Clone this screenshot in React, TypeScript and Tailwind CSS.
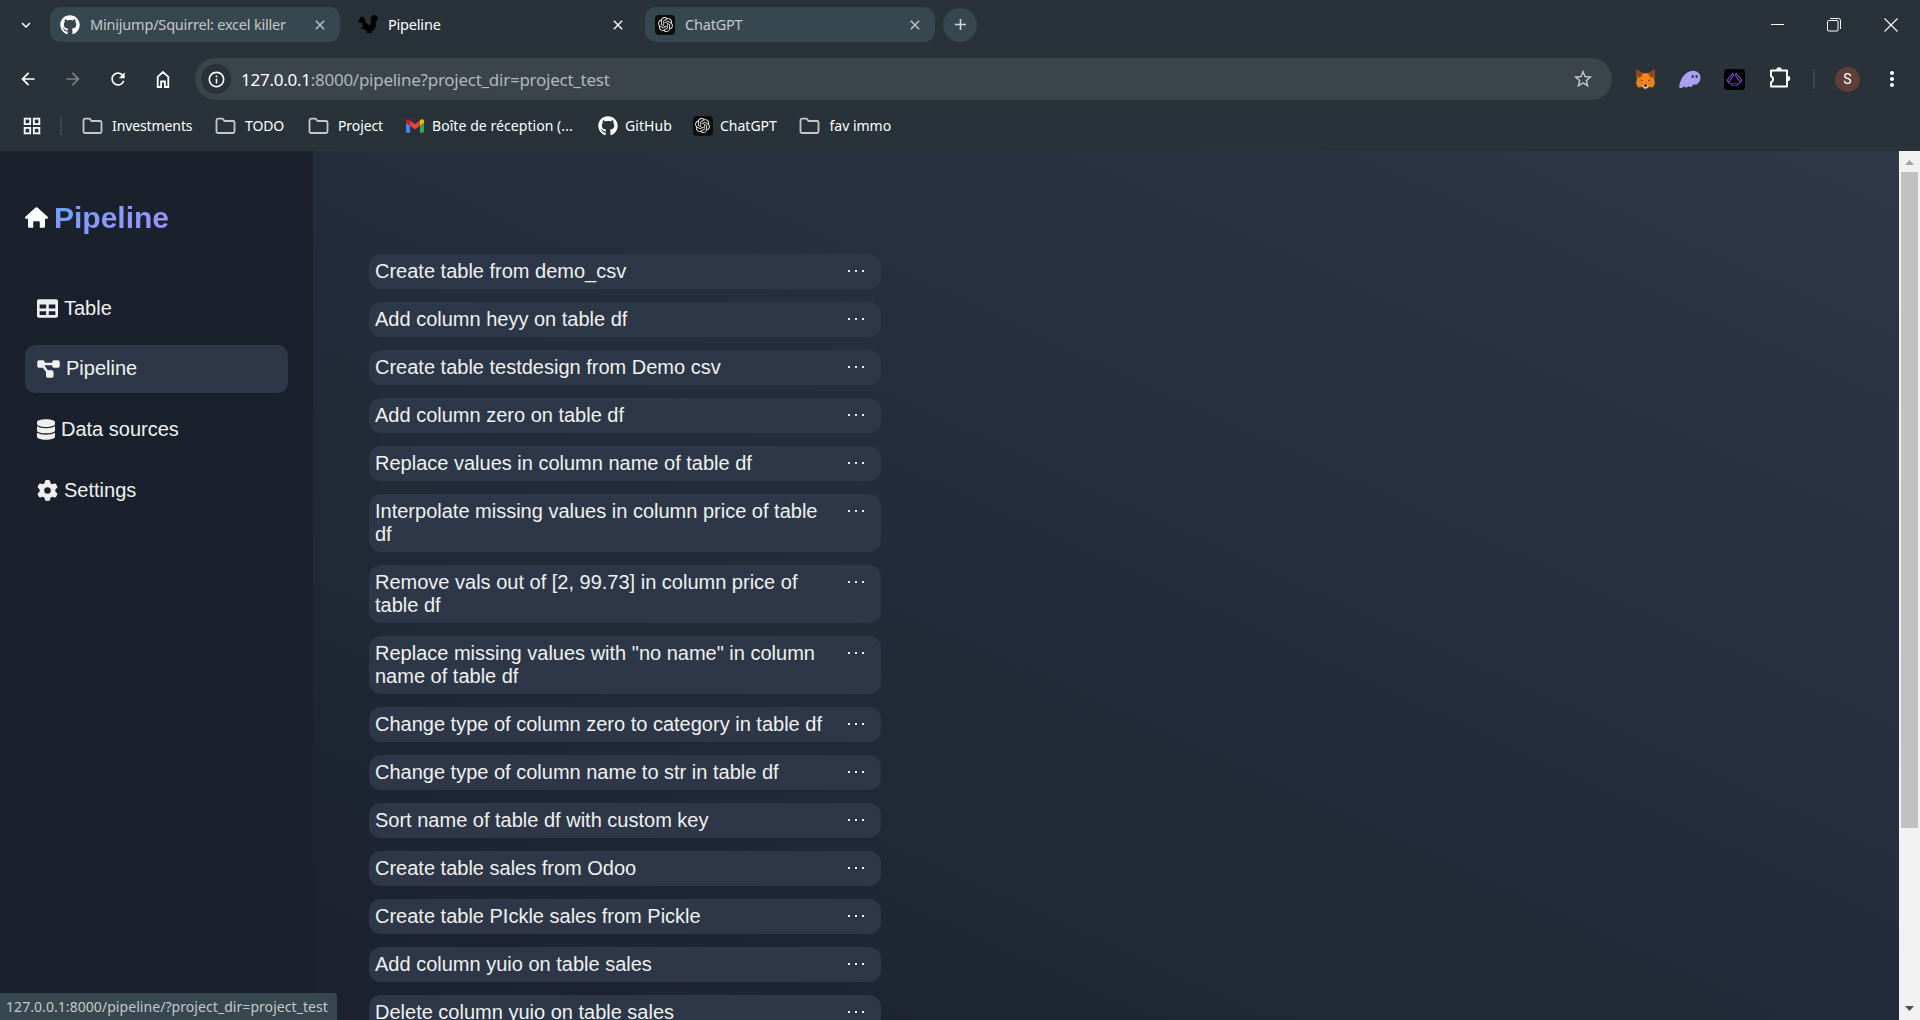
import React from 'react';
import { FaGithub, FaTable, FaDatabase } from 'react-icons/fa';
import { FaGear, FaDiagramProject } from 'react-icons/fa6';
import { SiOpenai } from 'react-icons/si';
import {
  MdArrowBack, MdArrowForward, MdStarOutline, MdRefresh,
  MdExpandMore, MdClose, MdAdd, MdMoreVert, MdGridView, MdInfoOutline,
} from 'react-icons/md';

const ui = "font-['Noto_Sans',sans-serif]";

function Folder() {
  return (
    <svg width="21" height="18" viewBox="0 0 21 18" fill="none" stroke="#c7c7c7" strokeWidth="1.8">
      <path d="M1.500 3.300c0-.9.600-1.600 1.500-1.600h4.600l2 2.300H18c.9 0 1.500.7 1.500 1.500v9c0 .9-.6 1.500-1.500 1.500H3c-.9 0-1.500-.6-1.500-1.500z" />
    </svg>
  );
}

function Gmail() {
  return (
    <svg width="18" height="14" viewBox="52 42 88 66">
      <path fill="#4285f4" d="M58 108h14V74L52 59v43c0 3.32 2.69 6 6 6" />
      <path fill="#34a853" d="M120 108h14c3.32 0 6-2.69 6-6V59l-20 15" />
      <path fill="#fbbc04" d="M120 48v26l20-15v-8c0-7.42-8.47-11.65-14.4-7.2" />
      <path fill="#ea4335" d="M72 74V48l24 18 24-18v26L96 92" />
      <path fill="#c5221f" d="M52 51v8l20 15V48l-5.6-4.2c-5.94-4.45-14.4-.22-14.4 7.2" />
    </svg>
  );
}

function Chat() {
  return (
    <span className="flex size-5 items-center justify-center rounded-[4px] bg-[#0d0d0d]">
      <SiOpenai className="size-[15px] text-[#e4e4e4]" />
    </span>
  );
}

function Squirrel() {
  return (
    <svg width="20" height="20" viewBox="0 0 20 20" fill="black">
      <path d="M3 1l1.300 1.800L5.500 1l.8 2.600C7.500 4.600 7.600 6 7.300 7.200c2 .7 3.200 2 3.800 3.700 1.500-1 2-2.400 1.700-4.400C12.300 2.800 13.800.3 16.500.3 18.800.3 20 2 19.700 4c-.2 1.400-1.200 2.200-2.400 2.400 1.200 2.600.8 6-1.200 8-.9 1-1.900 1.500-2.900 1.800l.6 1.800H8.500l-.3-1.300 1.600-.3c-1.700-.4-3-1.400-3.800-2.800l-2.800.7-.7-1.100 2.500-1.500C4.500 10.700 4.200 9.400 4.200 8 2.500 8.200.9 7.700.2 6.500L1.700 4z" />
    </svg>
  );
}

function Fox() {
  return (
    <svg width="21" height="20" viewBox="0 0 21 20">
      <path fill="#e8821e" d="M1 .5l7 4h5l7-4v6l-1 3 1 5-2 4-4-.6-2 1.600H9l-2-1.600-4 .6-2-4 1-5-1-3z" />
      <path fill="#8f471d" d="M1 .5l7 4-2 3.500-4.200.8L1 6zM20 .5l-7 4 2 3.500 4.200.8L20 6z" />
      <path fill="#f6851b" d="M8 4.500h5l2 5-2.500 6h-4L6 9.500z" />
      <path fill="#763d16" d="M5 10.500l3 .7-.7 1.300zM16 10.500l-3 .7.7 1.300z" />
      <path fill="#d8d0c8" d="M7.500 16h6l-1.700 3.500H9.200z" />
      <path fill="#161616" d="M8.800 15.700h3.400l-.7 2h-2z" />
    </svg>
  );
}

function Ghost() {
  return (
    <svg width="22" height="19" viewBox="0 0 22 19">
      <path fill="#ab9ff2" d="M1 18c-1.500-.5-.7-4.500 1.500-9C5 4 10 .5 14.500.7 19 1 21.700 4 21.500 8c-.3 4-3 6.500-5 6.800-1 .2-1.500-.2-1.900-.5-.8 1.800-2.300 3-3.600 2.800-.8-.1-1.100-.7-1.200-1.300-1 1.300-2.200 2-3.300 1.700-.7-.2-1-.8-.9-1.400C4 17.500 2.300 18.500 1 18z" />
      <ellipse cx="13.700" cy="6.500" rx="1.100" ry="1.500" fill="#2a3138" />
      <ellipse cx="17.500" cy="6.500" rx="1.100" ry="1.500" fill="#2a3138" />
    </svg>
  );
}

function Prism() {
  return (
    <svg width="21" height="21" viewBox="0 0 21 21" fill="none" strokeWidth="1.100">
      <rect width="21" height="21" rx="3.500" fill="#030305" />
      <path d="M8.600 4.500L3.200 11.200l1.500 2.300 5-7.500z" stroke="#8b46d8" />
      <path d="M12.400 4.500l5.400 6.700-1.500 2.300-5-7.500z" stroke="#8b46d8" />
      <path d="M5.800 14.600h9.400l-2 1.900H7.800z" stroke="#3a2bd0" />
    </svg>
  );
}

function Puzzle() {
  return (
    <svg width="22" height="22" viewBox="0 0 22 22">
      <path fill="none" stroke="white" strokeWidth="2" strokeLinejoin="round" d="M2 3.500h16v16H2v-4.300a3.200 3.200 0 0 0 0-6z" />
      <path fill="white" d="M7.300 3a2.700 2.700 0 0 1 5.400 0zM18.500 8.700a2.700 2.700 0 0 1 0 5.400z" />
    </svg>
  );
}

function BrowserHome() {
  return (
    <svg width="20" height="20" viewBox="0 0 20 20" fill="none" stroke="white" strokeWidth="1.800">
      <path d="M4.700 18V7.800L10 3l5.300 4.800V18h-3.400v-5.500H8.100V18z" />
    </svg>
  );
}

function House() {
  return (
    <svg width="23" height="21" viewBox="0 0 23 21" fill="white">
      <path d="M10.600.6a1.300 1.300 0 0 1 1.800 0l10.200 9.200c.9.900.3 2-.7 2H20v7.400c0 1-.6 1.600-1.600 1.600h-3.600v-5.200c0-.8-.5-1.300-1.300-1.300h-4c-.8 0-1.300.5-1.300 1.300v5.200H4.600c-1 0-1.600-.6-1.600-1.600v-7.400H1.100c-1 0-1.500-1.100-.7-2z" />
    </svg>
  );
}

function Tab({ icon, title, active, width }: { icon: React.ReactNode; title: string; active?: boolean; width: string }) {
  return (
    <div className={`flex h-[35px] items-center rounded-[11px] ${width} ${active ? 'pr-[19px] pl-[18px] text-white' : 'bg-[#36474f] pr-[12px] pl-[10px] text-[#c7c7c7]'}`}>
      {icon}
      <span className="ml-[10px] grow pt-px text-[14.5px] tracking-[-0.2px] whitespace-nowrap">{title}</span>
      <MdClose className="size-4" />
    </div>
  );
}

function Bookmark({ icon, label, width, text = 'ml-[9px] tracking-[-0.1px]' }: { icon: React.ReactNode; label: string; width: string; text?: string }) {
  return (
    <div className={`flex shrink-0 items-center ${width}`}>
      <span className="flex w-[21px] justify-center">{icon}</span>
      <span className={`text-[14px] whitespace-nowrap ${text}`}>{label}</span>
    </div>
  );
}

const steps = [
  'Create table from demo_csv',
  'Add column heyy on table df',
  'Create table testdesign from Demo csv',
  'Add column zero on table df',
  'Replace values in column name of table df',
  'Interpolate missing values in column price of table df',
  'Remove vals out of [2, 99.73] in column price of table df',
  'Replace missing values with "no name" in column name of table df',
  'Change type of column zero to category in table df',
  'Change type of column name to str in table df',
  'Sort name of table df with custom key',
  'Create table sales from Odoo',
  'Create table PIckle sales from Pickle',
  'Add column yuio on table sales',
  'Delete column yuio on table sales',
];

const nav = [
  { label: 'Table', icon: <FaTable className="size-[21px]" /> },
  { label: 'Pipeline', icon: <FaDiagramProject className="h-[20px] w-[23px]" />, active: true },
  { label: 'Data sources', icon: <FaDatabase className="h-[21px] w-[18px]" /> },
  { label: 'Settings', icon: <FaGear className="size-[21px]" /> },
];

export default function App() {
  return (
    <div className="relative flex h-[1020px] w-[1920px] flex-col overflow-hidden bg-[#283238]">
      <header className={`h-[151px] shrink-0 text-white ${ui}`}>
        <div className="flex h-[49px] items-center">
          <MdExpandMore className="ml-[17px] size-[18px]" />
          <div className="ml-[15px] flex">
            <Tab width="w-[290px]" icon={<FaGithub className="size-5 text-white" />} title="Minijump/Squirrel: excel killer" />
            <Tab width="w-[305px]" active icon={<Squirrel />} title="Pipeline" />
            <Tab width="w-[290px]" icon={<Chat />} title="ChatGPT" />
          </div>
          <div className="ml-[8px] flex size-[34px] items-center justify-center rounded-full bg-[#36474f] text-[#d5d5d5]">
            <MdAdd className="size-[19px]" />
          </div>
          <div className="ml-auto flex items-center gap-[43px] pr-[22px]">
            <span className="h-px w-[13px] bg-white" />
            <svg width="14" height="14" viewBox="0 0 14 14" fill="none" stroke="white">
              <rect x=".5" y="2.500" width="10.500" height="10.500" rx="1" />
              <path d="M3 .5h8.500a2 2 0 0 1 2 2V11" />
            </svg>
            <svg width="14" height="14" viewBox="0 0 14 14" stroke="white" strokeWidth="1.100"><path d="M.5.5l13 13M13.500.5l-13 13" /></svg>
          </div>
        </div>
        <div className="flex h-[60px] items-center">
          <div className="flex gap-[25px] pl-[18px]">
            <MdArrowBack className="size-5" />
            <MdArrowForward className="size-5 text-[#7d8488]" />
            <MdRefresh className="size-5" />
            <BrowserHome />
          </div>
          <div className="ml-[22px] flex h-[42px] w-[1417px] items-center rounded-full bg-[#3a4449] pr-[18px] pl-[6px]">
            <span className="flex size-[30px] items-center justify-center rounded-full bg-[#283238]">
              <MdInfoOutline className="size-[19px]" />
            </span>
            <span className="ml-[10px] pt-px text-[17px] tracking-[-0.26px] text-[#b4b8ba]"><span className="text-white">127.0.0.1</span>:8000/pipeline?project_dir=project_test</span>
            <MdStarOutline className="ml-auto size-[22px] text-[#c7c7c7]" />
          </div>
          <div className="flex items-center pl-[23px]">
            <Fox />
            <span className="ml-[23px]"><Ghost /></span>
            <span className="ml-[23px]"><Prism /></span>
            <span className="-mt-[3px] ml-[24px]"><Puzzle /></span>
            <span className="ml-[22px] h-[20px] w-[2px] bg-[#36474f]" />
            <span className="ml-[20px] flex size-[25px] items-center justify-center rounded-full bg-[#5d4037] font-['Roboto',sans-serif] text-[14px]">S</span>
            <MdMoreVert className="ml-[20px] size-[24px]" />
          </div>
        </div>
        <div className="flex h-[33px] items-center">
          <MdGridView className="ml-[21px] size-[22px]" />
          <span className="ml-[17px] h-[19px] w-[2px] bg-[#36474f]" />
          <div className="ml-[20px] flex">
            <Bookmark width="w-[133px]" icon={<Folder />} label="Investments" />
            <Bookmark width="w-[93px]" icon={<Folder />} label="TODO" />
            <Bookmark width="w-[96px]" icon={<Folder />} label="Project" />
            <Bookmark width="w-[193px]" icon={<Gmail />} label="Boîte de réception (..." text="ml-[7px] tracking-[0.06px]" />
            <Bookmark width="w-[95px]" icon={<FaGithub className="size-5" />} label="GitHub" text="ml-[7px] tracking-[0.05px]" />
            <Bookmark width="w-[107px]" icon={<Chat />} label="ChatGPT" text="ml-[7px]" />
            <Bookmark width="w-[120px]" icon={<Folder />} label="fav immo" text="ml-[9.5px]" />
          </div>
        </div>
      </header>

      <div className="flex min-h-0 grow font-['Liberation_Sans',Arial,sans-serif] text-[20px] leading-[23px] text-[#f0f0f0]">
        <div className="flex w-[1899px] bg-gradient-to-tr from-[#1a202c] to-[#2d3748]">
          <aside className="w-[313px] shrink-0 bg-[#1a202c] px-[25px] pt-[45px]">
            <div className="flex h-[42px] items-center">
              <House />
              <h1 className="ml-[6px] bg-gradient-to-br from-[#60a5fa] to-[#a78bfa] bg-clip-text pt-px text-[30px] leading-[42px] font-bold text-transparent">Pipeline</h1>
            </div>
            <nav className="mt-[46px] flex flex-col gap-[12.7px]">
              {nav.map((n) => (
                <a key={n.label} className={`flex h-12 items-center gap-[6px] rounded-[10px] px-3 ${n.active ? 'bg-[#2d3748]' : ''}`}>
                  {n.icon}
                  <span>{n.label}</span>
                </a>
              ))}
            </nav>
          </aside>
          <main className="ml-[56px] flex w-[512px] flex-col gap-[13px] overflow-hidden pt-[103px]">
            {steps.map((s) => (
              <div key={s} className="flex shrink-0 justify-between rounded-[12px] bg-[#2d3748] p-[6px] pr-[16px]">
                <span className="w-[452px]">{s}</span>
                <svg width="18" height="23" viewBox="0 0 18 23" fill="#f0f0f0">
                  <rect x="1" y="10" width="2" height="2" /><rect x="8" y="10" width="2" height="2" /><rect x="15" y="10" width="2" height="2" />
                </svg>
              </div>
            ))}
          </main>
        </div>
        <div className="flex w-[21px] flex-col items-center bg-[#f1f1f1]">
          <svg className="mt-[8px]" width="9" height="6" viewBox="0 0 9 6"><path d="M0 6L4.500 1 9 6z" fill="#a3a3a3" /></svg>
          <div className="mt-[7px] h-[656px] w-[17px] bg-[#c1c1c1]" />
          <svg className="mt-auto mb-[8px]" width="9" height="6" viewBox="0 0 9 6"><path d="M0 0h9L4.500 5z" fill="#505050" /></svg>
        </div>
      </div>

      <div className={`absolute bottom-0 left-0 flex h-[27px] w-[337px] items-center rounded-tr-[4px] bg-[#36474f] pl-[6px] text-[14px] tracking-[0.06px] whitespace-nowrap text-[#c7c7c7] ${ui}`}>
        127.0.0.1:8000/pipeline/?project_dir=project_test
      </div>
    </div>
  );
}
